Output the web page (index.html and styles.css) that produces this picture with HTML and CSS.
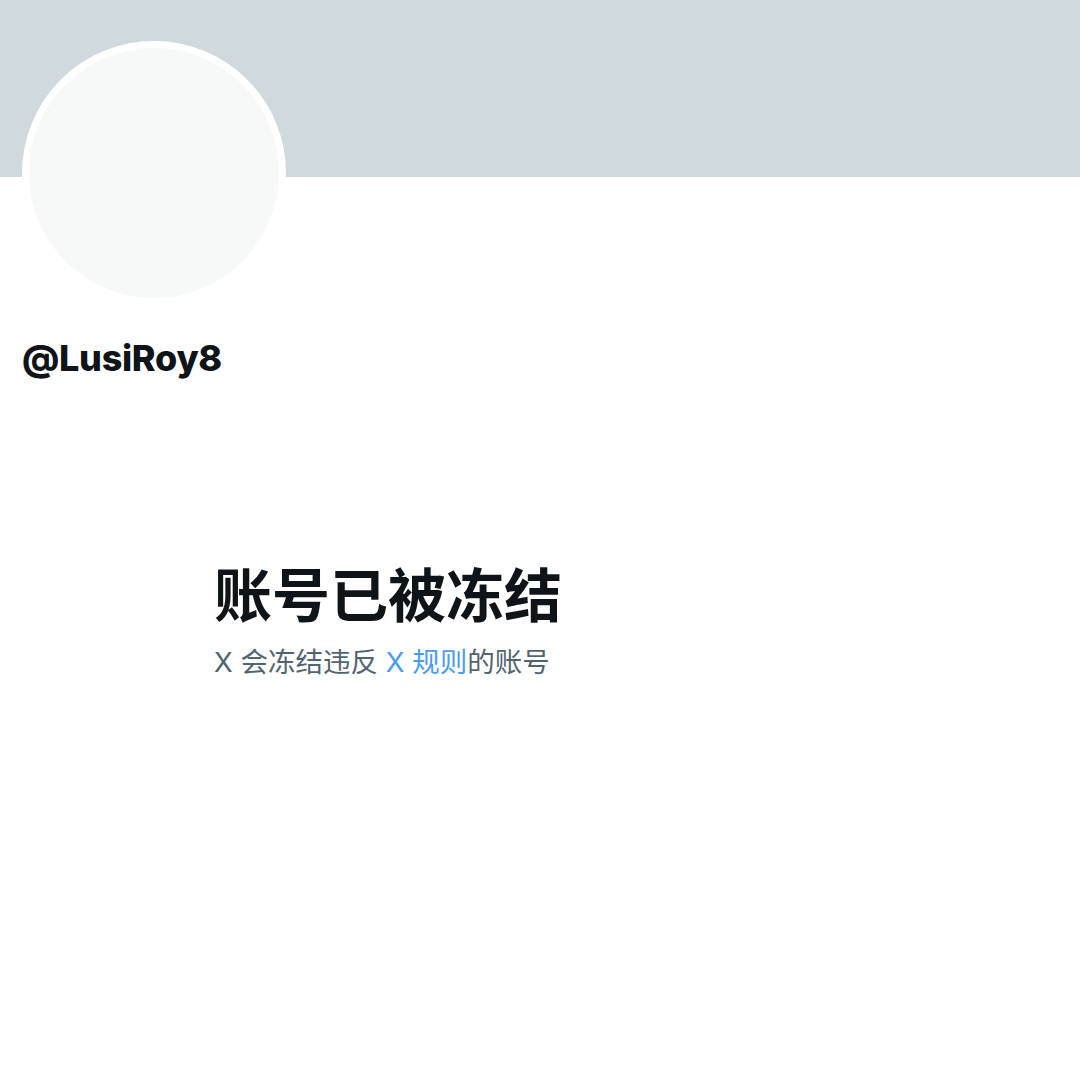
FILE: index.html
```html
<!DOCTYPE html>
<html lang="zh-CN">
<head>
    <meta charset="UTF-8">
    <meta name="viewport" content="width=device-width, initial-scale=1.0">
    <title>@LusiRoy8</title>
    <link rel="stylesheet" href="styles.css">
</head>
<body>
    <div class="banner"></div>
    <div class="profile">
        <div class="avatar"></div>
        <div class="handle">@LusiRoy8</div>
    </div>
    <div class="notice">
        <h1>账号已被冻结</h1>
        <p>X 会冻结违反 <a href="#">X 规则</a>的账号</p>
    </div>
</body>
</html>
```

FILE: styles.css
```css
body {
    margin: 0;
    background-color: #fff;
    font-family: Inter, "Noto Sans CJK SC", sans-serif;
    color: #0f1419;
}

.banner {
    height: 177px;
    background-color: #cfd9de;
}

.profile {
    padding: 0 22px;
    margin-top: -136px;
}

.avatar {
    width: 250px;
    height: 250px;
    border: 7px solid #fff;
    border-radius: 50%;
    background-color: #f7f9f9;
}

.handle {
    margin-top: 33px;
    font-size: 36px;
    font-weight: 800;
    line-height: 40px;
    letter-spacing: -0.3px;
}

.notice {
    padding: 0 0 0 214px;
    margin-top: 178px;
}

.notice h1 {
    margin: 0;
    font-family: "Noto Sans CJK SC", sans-serif;
    font-size: 58px;
    font-weight: 700;
    line-height: 72px;
}

.notice p {
    margin: 14px 0 0;
    font-size: 27.5px;
    line-height: 40px;
    color: #536471;
}

.notice a {
    color: #4a9ded;
    text-decoration: none;
}
```
